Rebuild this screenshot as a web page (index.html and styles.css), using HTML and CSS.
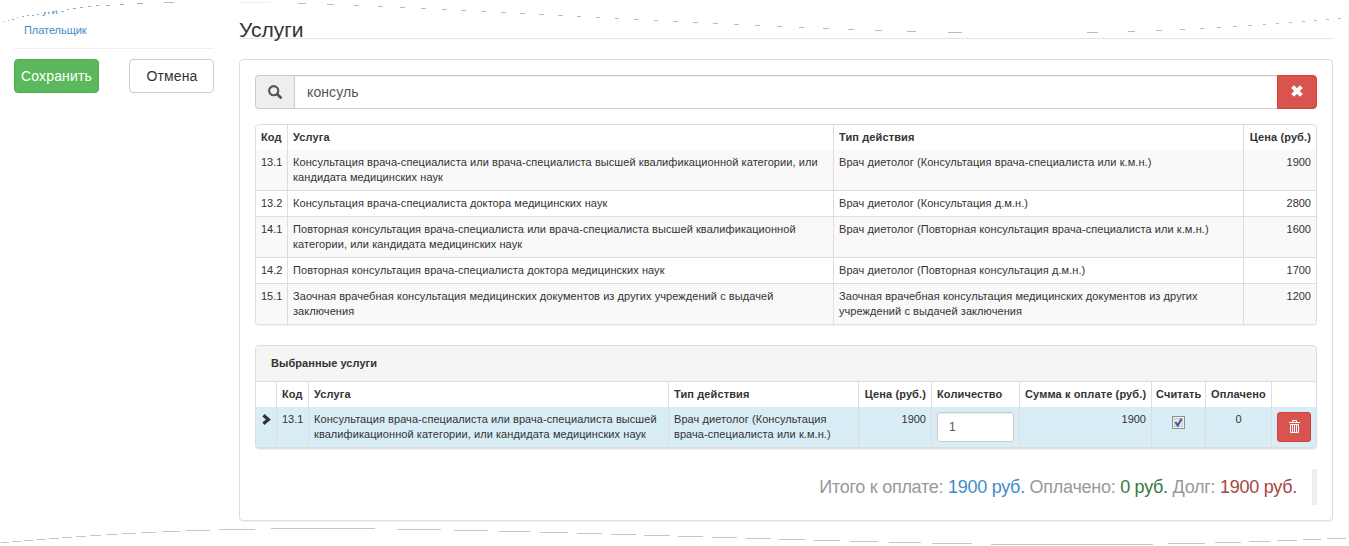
FILE: index.html
```html
<!DOCTYPE html>
<html lang="ru">
<head>
<meta charset="utf-8">
<title>Услуги</title>
<link rel="stylesheet" href="styles.css">
</head>
<body>
<div class="page">
  <aside class="sidebar">
    <nav class="nav">
      <a class="nav-link">Услуги</a>
      <a class="nav-link">Плательщик</a>
    </nav>
    <div class="actions">
      <button class="btn btn-success">Сохранить</button>
      <button class="btn btn-default">Отмена</button>
    </div>
  </aside>
  <main class="main">
    <h1 class="title"><span>Услуги</span></h1>
    <section class="panel body-panel">
      <div class="search">
        <span class="addon"><svg width="14" height="14" viewBox="0 0 14 14"><circle cx="5.7" cy="5.7" r="4.6" fill="none" stroke="#555" stroke-width="2.1"/><path d="M9 9l3.6 3.6" stroke="#555" stroke-width="2.8" stroke-linecap="round"/></svg></span>
        <span class="query">консуль</span>
        <button class="clear"><svg width="12" height="12" viewBox="0 0 12 12"><path d="M1.6 1.6l8.8 8.8M10.4 1.6l-8.8 8.8" stroke="#fff" stroke-width="4"/></svg></button>
      </div>

      <div class="panel found">
        <table class="table striped">
          <colgroup><col class="f-code"><col class="f-name"><col class="f-type"><col class="f-price"></colgroup>
          <thead><tr><th>Код</th><th>Услуга</th><th>Тип действия</th><th class="num">Цена (руб.)</th></tr></thead>
          <tbody>
            <tr><td class="dg">13.1</td><td>Консультация врача-специалиста или врача-специалиста высшей квалификационной категории, или<br>кандидата медицинских наук</td><td>Врач диетолог (Консультация врача-специалиста или к.м.н.)</td><td class="num dg">1900</td></tr>
            <tr><td class="dg">13.2</td><td>Консультация врача-специалиста доктора медицинских наук</td><td>Врач диетолог (Консультация д.м.н.)</td><td class="num dg">2800</td></tr>
            <tr><td class="dg">14.1</td><td>Повторная консультация врача-специалиста или врача-специалиста высшей квалификационной<br>категории, или кандидата медицинских наук</td><td>Врач диетолог (Повторная консультация врача-специалиста или к.м.н.)</td><td class="num dg">1600</td></tr>
            <tr><td class="dg">14.2</td><td>Повторная консультация врача-специалиста доктора медицинских наук</td><td>Врач диетолог (Повторная консультация д.м.н.)</td><td class="num dg">1700</td></tr>
            <tr><td class="dg">15.1</td><td>Заочная врачебная консультация медицинских документов из других учреждений с выдачей<br>заключения</td><td>Заочная врачебная консультация медицинских документов из других<br>учреждений с выдачей заключения</td><td class="num dg">1200</td></tr>
          </tbody>
        </table>
      </div>

      <div class="panel chosen">
        <div class="heading">Выбранные услуги</div>
        <table class="table">
          <colgroup><col class="c-mark"><col class="c-code"><col class="c-name"><col class="c-type"><col class="c-price"><col class="c-qty"><col class="c-sum"><col class="c-count"><col class="c-paid"><col class="c-del"></colgroup>
          <thead><tr><th></th><th>Код</th><th>Услуга</th><th>Тип действия</th><th class="num">Цена (руб.)</th><th>Количество</th><th class="num">Сумма к оплате (руб.)</th><th class="mid">Считать</th><th class="mid">Оплачено</th><th></th></tr></thead>
          <tbody>
            <tr class="info">
              <td class="mark"><svg width="9" height="11" viewBox="0 0 9 11"><path d="M1.4 1.2l5 4.3-5 4.3" fill="none" stroke="#333" stroke-width="3.2"/></svg></td>
              <td class="dg">13.1</td>
              <td>Консультация врача-специалиста или врача-специалиста высшей<br>квалификационной категории, или кандидата медицинских наук</td>
              <td>Врач диетолог (Консультация<br>врача-специалиста или к.м.н.)</td>
              <td class="num dg">1900</td>
              <td><div class="qty">1</div></td>
              <td class="num dg">1900</td>
              <td class="mid"><svg class="check" width="13" height="13" viewBox="0 0 13 13"><rect x=".5" y=".5" width="12" height="12" fill="#f4f4f4" stroke="#8e8f8f"/><rect x="2.5" y="2.5" width="8" height="8" fill="#e3e6ea" stroke="#c5cad0"/><path d="M3.5 6l2.2 3.6L9.6 2.8" fill="none" stroke="#42589c" stroke-width="2"/></svg></td>
              <td class="mid dg">0</td>
              <td><button class="trash"><svg width="11" height="13" viewBox="0 0 11 13" fill="none" stroke="#fff"><path d="M0 2.5h11M3.5 2V.5h4V2M1 4.5h9M1.500 4v8.500h8V4M3.500 5v7M5.500 5v7M7.500 5v7"/></svg></button></td>
            </tr>
          </tbody>
        </table>
      </div>

      <div class="totals"><span class="sums">Итого к оплате: <span class="blue">1900 руб.</span> Оплачено: <span class="green">0 руб.</span> Долг: <span class="red">1900 руб.</span></span></div>
    </section>
  </main>
</div>
<svg class="edge" width="1349" height="546" viewBox="0 0 1349 546" fill="none">
  <path fill="#fff" d="M0 0H200V2H140L100 5 62 9.500 54 11 42 12.500 40 15 24 17 0 22z"/>
  <path stroke="#aaa" d="M3 21.5h1M8 20.5h1M12 19.5h2M17 17.5h1M22 16.5h2M27 15.5h2M32 15.5h2M37 14.5h2M61 11.5h3M67 9.5h2M73 8.5h3M80 7.5h3M88 6.5h3M96 5.5h3M106 5.5h4M120 4.5h4M137 3.5h6"/>
  <path stroke="#bbb" d="M164 2.5h10M298 3.5h8M327 4.5h7M354 5.5h5M378 6.5h5M400 7.5h5M421 8.5h5M442 9.5h5M461 10.5h5M481 11.5h5M501 12.5h5M520 13.5h5M539 14.5h5M558 15.5h5M577 16.5h4M596 17.5h4M615 18.5h4M634 19.5h5M654 20.5h4M673 21.5h5M693 22.5h5M713 23.5h5M734 24.5h5M755 25.5h5M777 26.5h5M799 27.5h5M823 28.5h6M848 29.5h6M875 30.5h7M907 31.5h9M948 32.5h14M1087 32.5h11M1128 31.5h7M1156 30.5h6M1180 29.5h5M1200 28.5h4M1217 27.5h4M1233 26.5h4M1248 25.5h4M1263 24.5h3M1276 23.5h3M1289 22.5h3M1302 21.5h3M1314 20.5h3M1326 19.5h3M1338 18.5h3"/>
  <path stroke="#eee" d="M240 2.5h30"/>
  <path stroke="#f5f5f5" d="M1348.5 18V537"/>
  <path stroke="#c6c6c6" d="M1 542.5h8M12 541.5h9M24 540.5h9M36 539.5h10M49 538.5h10M62 537.5h10M76 536.5h10M90 535.5h11M106 534.5h12M122 533.5h14M141 532.5h15M162 531.5h18M186 530.5h24M219 529.5h36M271 528.5h104M397 529.5h44M454 530.5h34M499 531.5h31M540 532.5h28M577 533.5h25M611 534.5h25M644 535.5h26M678 536.5h25M712 537.5h25M746 538.5h25M779 539.5h26M814 540.5h26M850 541.5h28M889 542.5h32M932 543.5h40M991 544.5h162M1168 543.5h37M1215 542.5h26M1249 541.5h21M1277 540.5h20M1303 539.5h18M1327 538.5h19"/>
</svg>
</body>
</html>
```
FILE: styles.css
```css
* { box-sizing: border-box; }
body {
  margin: 0;
  height: 546px;
  overflow: hidden;
  position: relative;
  background: #fff;
  color: #333;
  font: 11px/15px "Liberation Sans", Arial, sans-serif;
}
button { font-family: inherit; margin: 0; padding: 0; }
svg { display: block; }
.page { display: flex; gap: 25px; padding: 0 16px 0 14px; }
.sidebar { width: 200px; }
.nav { height: 49px; padding: 1px 10px 0; border-bottom: 1px solid #eee; }
.nav-link { display: block; height: 20px; line-height: 18px; color: #428bca; letter-spacing: -.05px; }
.actions { display: flex; justify-content: space-between; padding-top: 10px; }
.btn { width: 85px; height: 34px; border: 1px solid #ccc; border-radius: 4px; font-size: 14px; line-height: 20px; white-space: nowrap; letter-spacing: .15px; }
.btn-success { background: #5cb85c; border-color: #4cae4c; color: #fff; }
.btn-default { background: #fff; color: #333; padding-left: 1px; }
.main { width: 1094px; }
.title { margin: 0 0 20px; height: 39px; padding-top: 18px; border-bottom: 1px solid #e5e5e5; font-size: 21px; line-height: 23px; font-weight: 400; }
.panel { border: 1px solid #ddd; border-radius: 4px; box-shadow: 0 1px 1px rgba(0,0,0,.05); background: #fff; }
.body-panel { height: 462px; padding: 15px; }
.search { display: flex; height: 34px; }
.addon { width: 39px; display: flex; align-items: center; justify-content: center; background: #eee; border: 1px solid #ccc; border-right: 0; border-radius: 4px 0 0 4px; }
.query { flex: 1; padding: 6px 12px; border: 1px solid #ccc; border-right: 0; box-shadow: inset 0 1px 1px rgba(0,0,0,.075); font-size: 14px; line-height: 20px; color: #555; letter-spacing: .1px; }
.clear { width: 40px; display: flex; align-items: center; justify-content: center; padding-bottom: 2px; background: #d9534f; border: 1px solid #d43f3a; border-radius: 0 4px 4px 0; }
.found { margin-top: 15px; overflow: hidden; }
.chosen { margin-top: 20px; overflow: hidden; }
.heading { height: 36px; padding: 10px 15px; background: #f5f5f5; border-bottom: 1px solid #ddd; font-weight: 700; letter-spacing: .06px; }
.table { width: 1060px; table-layout: fixed; border-collapse: separate; border-spacing: 0; }
.table th, .table td { padding: 5px; text-align: left; vertical-align: top; white-space: nowrap; border-right: 1px solid #ddd; }
.table th:last-child, .table td:last-child { border-right: 0; }
.table th { letter-spacing: .12px; }
.table td { letter-spacing: .07px; }
.table .dg { letter-spacing: 0; }
.table .num { text-align: right; }
.table .mid { text-align: center; }
.striped tbody tr:nth-child(odd) { background: #f9f9f9; }
.striped tbody tr + tr td { border-top: 1px solid #ddd; }
.f-code { width: 32px; } .f-name { width: 546px; } .f-type { width: 410px; } .f-price { width: 72px; }
.c-mark { width: 21px; } .c-code { width: 32px; } .c-name { width: 360px; } .c-type { width: 190px; } .c-price { width: 73px; }
.c-qty { width: 88px; } .c-sum { width: 132px; } .c-count { width: 54px; } .c-paid { width: 66px; } .c-del { width: 44px; }
.info { background: #d9edf7; }
.chosen .info td { border-bottom: 1px solid #ddd; }
.table .mark { padding: 7px 6px 0; }
.table th.mid { padding-left: 4px; padding-right: 4px; }
.qty { width: 77px; height: 30px; padding: 0 11px; background: #fff; border: 1px solid #ccc; border-radius: 3px; color: #555; font-size: 12px; line-height: 29px; box-shadow: inset 0 1px 1px rgba(0,0,0,.075); }
.check { margin: 4px auto 0; }
.trash { width: 34px; height: 30px; display: flex; align-items: center; justify-content: center; padding: 0 0 1px 1px; background: #d9534f; border: 1px solid #d43f3a; border-radius: 3px; }
.totals { display: flex; justify-content: flex-end; align-items: center; height: 36px; margin-top: 20px; padding-right: 15px; border-right: 5px solid #eee; color: #999; font-size: 18px; white-space: nowrap; letter-spacing: -.27px; }
.blue { color: #428bca; } .green { color: #3c763d; } .red { color: #a94442; }
.edge { position: absolute; left: 0; top: 0; pointer-events: none; }
```
